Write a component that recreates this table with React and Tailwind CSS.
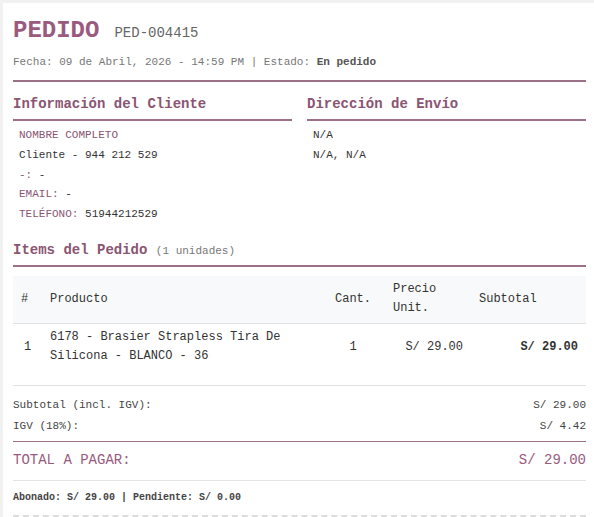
export default function App() {
    const mono = "font-['Liberation_Mono','Courier_New',monospace]";

    const cliente = [
        { label: "NOMBRE COMPLETO", value: "" },
        { label: "", value: "Cliente - 944 212 529" },
        { label: "-:", value: "-" },
        { label: "EMAIL:", value: "-" },
        { label: "TELÉFONO:", value: "51944212529" },
    ];

    return (
        <div className={`min-h-screen bg-[#f1f1f1] pt-[3px] pl-[3px] ${mono}`}>
            <div className="bg-white pl-[10px] pr-[8px] pt-[14px] h-[514px] overflow-hidden">
                {/* Header */}
                <div className="border-b-2 border-[#9c7088] pb-[10px]">
                    <div className="flex items-baseline leading-[28px]">
                        <span className="text-[24px] font-bold text-[#9a5a7e]">PEDIDO</span>
                        <span className="ml-[15px] text-[14px] text-[#666]">PED-004415</span>
                    </div>
                    <p className="mt-[7px] text-[11px] leading-[16px] text-[#777]">
                        Fecha: 09 de Abril, 2026 - 14:59 PM | Estado: <span className="font-bold text-[#555]">En pedido</span>
                    </p>
                </div>

                {/* Cliente / Envío */}
                <div className="grid grid-cols-2 gap-x-[15px]">
                    <div>
                        <h3 className="mt-[13px] pb-[6px] border-b-2 border-[#9c7088] text-[14px] leading-[18px] font-bold text-[#8a5472]">
                            Información del Cliente
                        </h3>
                        <div className="mt-[5px] pl-[6px] text-[11px] leading-[19.75px] text-[#333]">
                            {cliente.map((row, i) => (
                                <div key={i}>
                                    {row.label && <span className="text-[#8a5472]">{row.label}</span>}
                                    {row.label && row.value ? " " : ""}
                                    {row.value}
                                </div>
                            ))}
                        </div>
                    </div>
                    <div>
                        <h3 className="mt-[13px] pb-[6px] border-b-2 border-[#9c7088] text-[14px] leading-[18px] font-bold text-[#8a5472]">
                            Dirección de Envío
                        </h3>
                        <div className="mt-[5px] pl-[6px] text-[11px] leading-[19.75px] text-[#333]">
                            <div>N/A</div>
                            <div>N/A, N/A</div>
                        </div>
                    </div>
                </div>

                {/* Items */}
                <h3 className="mt-[16px] pb-[5px] border-b-2 border-[#9c7088] text-[14px] leading-[18px] font-bold text-[#8a5472]">
                    Items del Pedido <span className="text-[11px] font-normal text-[#777]">(1 unidades)</span>
                </h3>

                <table className="mt-[9px] w-full table-fixed border-collapse text-[12px] leading-[19.5px] text-[#333]">
                    <colgroup>
                        <col className="w-[29px]" />
                        <col className="w-[279px]" />
                        <col className="w-[64px]" />
                        <col className="w-[86px]" />
                        <col className="w-[115px]" />
                    </colgroup>
                    <thead>
                        <tr className="bg-[#f8f9fa] border-b border-[#e2e2e2]">
                            <th className="px-[8px] py-[4px] text-left font-normal align-middle">#</th>
                            <th className="px-[8px] py-[4px] text-left font-normal align-middle">Producto</th>
                            <th className="px-[8px] py-[4px] text-center font-normal align-middle">Cant.</th>
                            <th className="px-[8px] py-[4px] text-left font-normal align-middle">Precio Unit.</th>
                            <th className="px-[8px] py-[4px] text-left font-normal align-middle">Subtotal</th>
                        </tr>
                    </thead>
                    <tbody>
                        <tr className="border-b border-[#e2e2e2]">
                            <td className="px-[8px] pt-[4px] pb-[18px] text-center align-middle">1</td>
                            <td className="px-[8px] pt-[4px] pb-[18px] align-middle">6178 - Brasier Strapless Tira De Silicona - BLANCO - 36</td>
                            <td className="px-[8px] pt-[4px] pb-[18px] text-center align-middle">1</td>
                            <td className="px-[8px] pt-[4px] pb-[18px] text-right align-middle">S/ 29.00</td>
                            <td className="px-[8px] pt-[4px] pb-[18px] text-right font-bold align-middle">S/ 29.00</td>
                        </tr>
                    </tbody>
                </table>

                {/* Totales */}
                <div className="mt-[9px] text-[11px] leading-[21px] text-[#444]">
                    <div className="flex justify-between">
                        <span>Subtotal (incl. IGV):</span>
                        <span>S/ 29.00</span>
                    </div>
                    <div className="flex justify-between">
                        <span>IGV (18%):</span>
                        <span>S/ 4.42</span>
                    </div>
                </div>
                <div className="mt-[4px] border-t border-[#9c7088]" />
                <div className="mt-[8px] flex justify-between text-[14px] leading-[20px] text-[#9a5a7e]">
                    <span>TOTAL A PAGAR:</span>
                    <span>S/ 29.00</span>
                </div>
                <div className="mt-[10px] border-t border-[#e4e4e4]" />
                <p className="mt-[10px] text-[10px] leading-[14px] font-bold text-[#444]">
                    Abonado: S/ 29.00 | Pendiente: S/ 0.00
                </p>
                <div className="mt-[10px] border-t-2 border-dashed border-[#dcdcdc]" />
            </div>
        </div>
    );
}
